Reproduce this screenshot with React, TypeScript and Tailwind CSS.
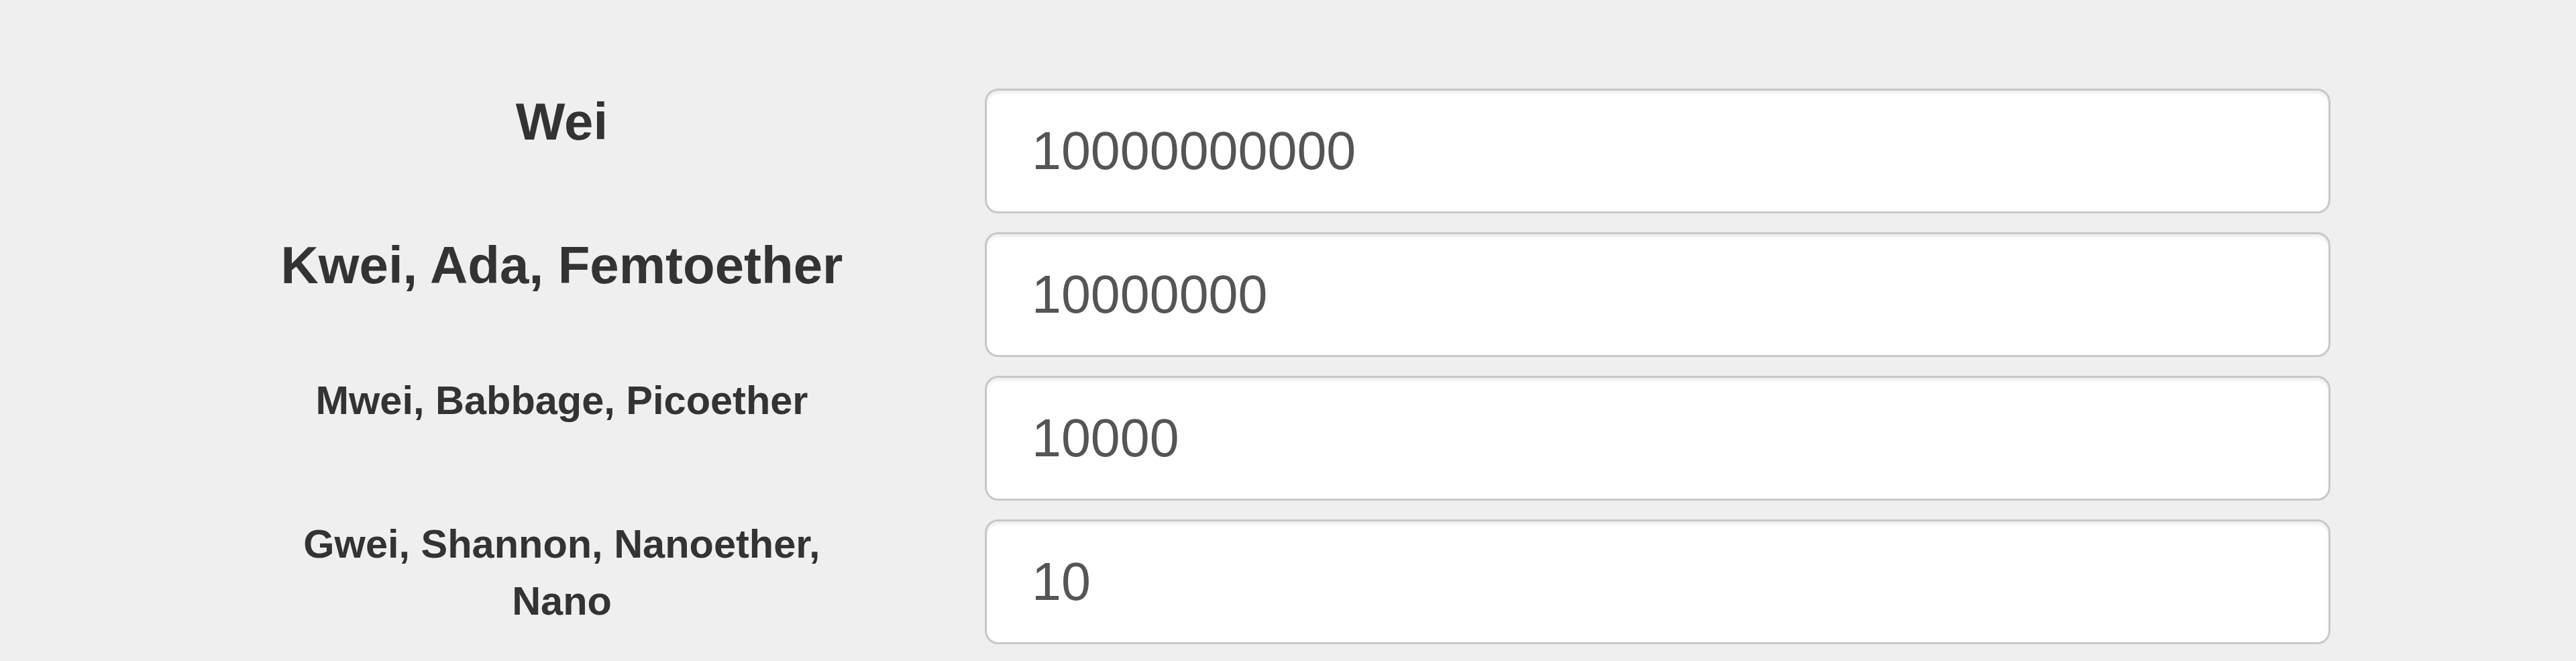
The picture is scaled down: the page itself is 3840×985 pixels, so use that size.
import React from "react";

type Unit = { label: string; value: string; big: boolean };

const units: Unit[] = [
  { label: "Wei", value: "10000000000", big: true },
  { label: "Kwei, Ada, Femtoether", value: "10000000", big: true },
  { label: "Mwei, Babbage, Picoether", value: "10000", big: false },
  { label: "Gwei, Shannon, Nanoether, Nano", value: "10", big: false },
];

function UnitRow({ unit }: { unit: Unit }) {
  return (
    <div className="flex items-start">
      <div
        className={
          unit.big
            ? "w-[1089px] shrink-0 px-[86px] text-center font-bold text-[#333333] text-[78px] leading-[110px]"
            : "w-[1089px] shrink-0 px-[86px] text-center font-bold text-[#333333] text-[59.5px] leading-[85px]"
        }
      >
        {unit.label}
      </div>
      <div className="flex-1 px-[86px] pt-[6px]">
        <input
          type="text"
          defaultValue={unit.value}
          className="block h-[186px] w-full rounded-[20px] border-[3px] border-[#c8c8c8] bg-white px-[67px] text-[79px] text-[#555555] shadow-[inset_0_4px_4px_rgba(0,0,0,0.075)] outline-none"
          style={{ fontFamily: '"Liberation Sans", Arial, sans-serif' }}
        />
      </div>
    </div>
  );
}

export default function App() {
  return (
    <div
      className="min-h-screen bg-[#efefef] pt-[126px]"
      style={{ fontFamily: '"Liberation Sans", Arial, Helvetica, sans-serif' }}
    >
      <div className="ml-[293px] flex w-[3267px] flex-col gap-[22px]">
        {units.map((u) => (
          <UnitRow key={u.label} unit={u} />
        ))}
      </div>
    </div>
  );
}
